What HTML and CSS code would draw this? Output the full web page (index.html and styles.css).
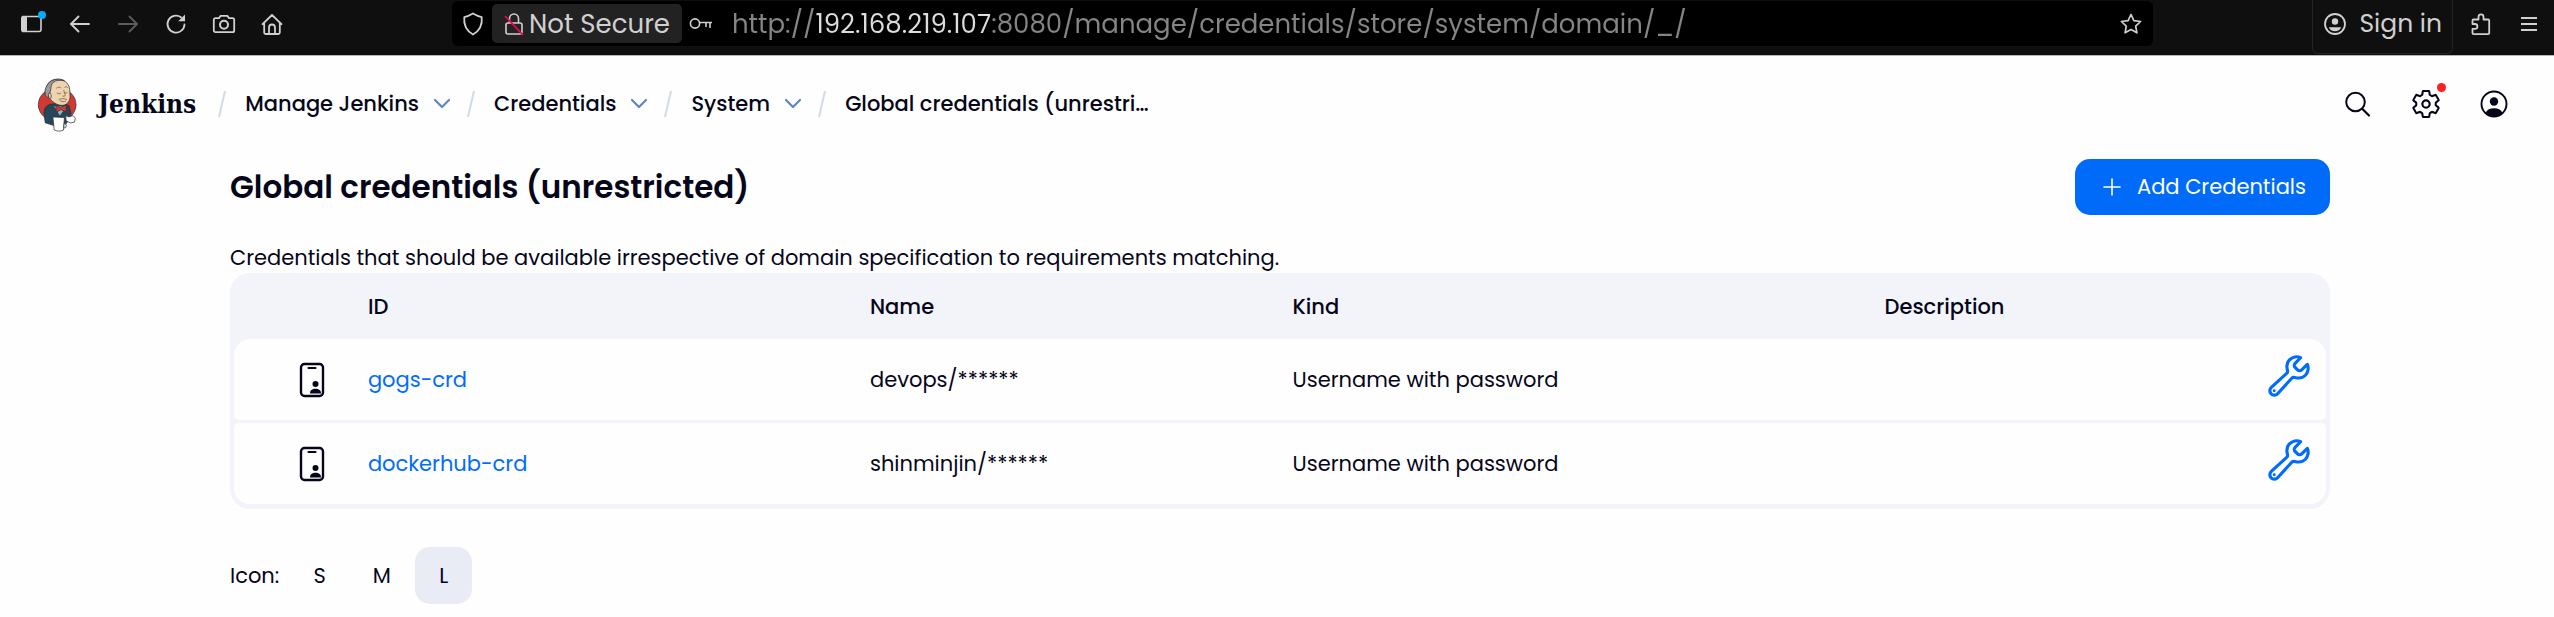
FILE: index.html
```html
<!doctype html>
<html lang="en">
  <head>
    <meta charset="utf-8">
    <title>Global credentials (unrestricted) - Jenkins</title>
    <link rel="stylesheet" href="styles.css">
  </head>
  <body>

    <!-- browser toolbar -->
    <div class="toolbar">
      <div class="toolbar-nav">
        <button class="tool" aria-label="Sidebar">
          <svg viewBox="0 0 24 24"><path d="M3 4.5h16a2 2 0 0 1 2 2v11a2 2 0 0 1-2 2H3z" fill="none" stroke="currentColor" stroke-width="1.600"/><path d="M3 4h4v16H3a2 2 0 0 1-2-2V6a2 2 0 0 1 2-2z" fill="currentColor"/><circle cx="22" cy="3" r="4" fill="#00adff"/></svg>
        </button>
        <button class="tool" aria-label="Back">
          <svg viewBox="0 0 24 24"><path d="M10.500 4.500 3 12l7.500 7.500M3 12h18" fill="none" stroke="currentColor" stroke-width="1.900" stroke-linecap="round"/></svg>
        </button>
        <button class="tool tool-off" aria-label="Forward">
          <svg viewBox="0 0 24 24"><path d="M13.500 4.500 21 12l-7.500 7.500M21 12H3" fill="none" stroke="currentColor" stroke-width="1.900" stroke-linecap="round"/></svg>
        </button>
        <button class="tool" aria-label="Reload">
          <svg viewBox="0 0 24 24"><path d="M20.500 12.500A8.500 8.500 0 1 1 17 5.200" fill="none" stroke="currentColor" stroke-width="1.800" stroke-linecap="round"/><path d="M21 2.500v6.800h-6.800z" fill="currentColor"/></svg>
        </button>
        <button class="tool" aria-label="Screenshot">
          <svg viewBox="0 0 24 24"><path d="M3.500 6.200H7l1.600-2.400h6.800L17 6.200h3.500a1.700 1.700 0 0 1 1.700 1.700v10.600a1.700 1.700 0 0 1-1.700 1.700h-17a1.700 1.700 0 0 1-1.700-1.700V7.900a1.700 1.700 0 0 1 1.700-1.700z" fill="none" stroke="currentColor" stroke-width="1.800" stroke-linejoin="round"/><circle cx="12" cy="12.700" r="4" fill="none" stroke="currentColor" stroke-width="2"/></svg>
        </button>
        <button class="tool" aria-label="Home">
          <svg viewBox="0 0 24 24"><path d="M2.500 12.200 12 3l9.500 9.200M4.200 11v9.500a1.500 1.500 0 0 0 1.500 1.500h12.600a1.500 1.500 0 0 0 1.500-1.500V11M9 22v-6.500a3 3 0 0 1 6 0V22" fill="none" stroke="currentColor" stroke-width="1.800" stroke-linecap="round" stroke-linejoin="round"/></svg>
        </button>
      </div>

      <div class="urlbar">
        <svg class="url-shield" viewBox="0 0 22 24"><path d="M11 1.500c3 1.800 5.500 2.900 8.700 3.600.8 7.400-1.700 13.400-8.700 17.400C4 18.500 1.500 12.500 2.300 5.100 5.500 4.400 8 3.300 11 1.500z" fill="none" stroke="currentColor" stroke-width="1.800" stroke-linejoin="round"/></svg>
        <button class="not-secure">
          <svg viewBox="0 0 20 24"><path d="M5.500 11V6.500a4.500 4.500 0 0 1 9 0V11M4 11h12a2 2 0 0 1 2 2v7a2 2 0 0 1-2 2H4a2 2 0 0 1-2-2v-7a2 2 0 0 1 2-2z" fill="none" stroke="currentColor" stroke-width="1.600"/><path d="M1 4l18 19" stroke="#f0064b" stroke-width="1.800"/></svg>
          Not Secure
        </button>
        <svg class="url-key" viewBox="0 0 24 14"><circle cx="6" cy="6.500" r="4.600" fill="none" stroke="currentColor" stroke-width="1.600"/><path d="M10.600 5.500H23M21 5.500V11M17 5.500V10" fill="none" stroke="currentColor" stroke-width="1.600"/></svg>
        <input class="url-input" type="text" aria-label="Address" value="http://192.168.219.107:8080/manage/credentials/store/system/domain/_/">
        <button class="tool" aria-label="Bookmark">
          <svg viewBox="0 0 24 24"><path d="M12 2.500l2.900 6.100 6.700.9-4.900 4.600 1.200 6.700L12 17.600l-5.900 3.200 1.200-6.700-4.900-4.600 6.700-.9z" fill="none" stroke="currentColor" stroke-width="1.700" stroke-linejoin="round"/></svg>
        </button>
      </div>

      <button class="sign-in">
        <svg viewBox="0 0 24 24"><circle cx="12" cy="12" r="10" fill="none" stroke="currentColor" stroke-width="1.800"/><circle cx="12" cy="9.500" r="3.200" fill="currentColor"/><path d="M5.800 15.200h12.400c-1 2.600-3.400 4-6.200 4s-5.200-1.400-6.200-4z" fill="currentColor"/></svg>
        Sign in
      </button>
      <div class="toolbar-end">
        <button class="tool" aria-label="Extensions">
          <svg viewBox="0 0 24 24"><path d="M3.500 8.500a1 1 0 0 1 1-1h5V4.800a2.500 2.500 0 0 1 5 0v2.700h4.700a1 1 0 0 1 1 1V21a1.200 1.200 0 0 1-1.200 1.200H4.700A1.200 1.200 0 0 1 3.500 21v-4.200H6a2.400 2.400 0 0 0 0-4.800H3.500z" fill="none" stroke="currentColor" stroke-width="1.800" stroke-linejoin="round"/></svg>
        </button>
        <button class="tool" aria-label="Menu">
          <svg viewBox="0 0 24 24"><path d="M4 6h16M4 12h16M4 18h16" stroke="currentColor" stroke-width="1.800"/></svg>
        </button>
      </div>
    </div>

    <!-- jenkins header -->
    <header class="header">
      <a class="brand" href="/">
        <svg class="brand-logo" viewBox="20 32 130 165">
          <g stroke="#2b3035" stroke-width="2.200" stroke-linejoin="round">
            <ellipse cx="84" cy="115" rx="57" ry="51" fill="#d33833"/>
            <path d="M62 114c-12 4-18 14-18 26l4 30 26 8 38-6 14-30-6-24-20-8z" fill="#24475a"/>
            <path d="M72 118l20 32 22-30z" fill="#8fb4c6"/>
            <path d="M52 78c-4-22 8-38 30-40 22-1 36 10 40 30l1 24c-1 16-12 26-26 25-18-1-36-14-45-39z" fill="#efd3ae"/>
            <path d="M48 84c-2-10 0-20 6-28 6-12 18-18 34-18 8 0 14 2 18 5-14-3-26-2-34 5-6 5-6 12-7 18l-4 20-4 8c-5-2-8-6-9-10z" fill="#9a9a9c"/>
            <path d="M57 82c4-4 9-1 9 7s-4 10-7 5z" fill="#efd3ae"/>
            <path d="M80 117l14 7 17-9 1 22-16-7-15 8z" fill="#d33833"/>
            <path d="M71 152l35 2-3 38c-8 4-20 4-28-1z" fill="#fff"/>
            <path d="M110 148l9 4 13-4 7 8-3 12-12 2-13-6z" fill="#fff"/>
            <path d="M105 172l7 4-2 8-6 2z" fill="#fff"/>
          </g>
          <path d="M82 65c4-4 9-4 13-1M107 62c3-2 6-1 8 1M84 80c4 3 8 3 11 0M106 79c3 2 6 2 8-1M104 72c1 8 5 11 4 15-1 3-4 3-7 2M90 99c7-3 14-3 22 0M93 103c6 4 12 4 17 1" fill="none" stroke="#5a4a3c" stroke-width="2" stroke-linecap="round"/>
        </svg>
        Jenkins
      </a>
      <nav class="crumbs">
        <svg class="slash" viewBox="0 0 10 28"><path d="M8 1 2 27" stroke="#d3dae8" stroke-width="2"/></svg>
        <a href="/manage">Manage Jenkins</a>
        <svg class="chevron" viewBox="0 0 18 10"><path d="M2 1l7 7 7-7" fill="none" stroke="#5f87bf" stroke-width="2.200" stroke-linecap="round" stroke-linejoin="round"/></svg>
        <svg class="slash" viewBox="0 0 10 28"><path d="M8 1 2 27" stroke="#d3dae8" stroke-width="2"/></svg>
        <a href="/manage/credentials">Credentials</a>
        <svg class="chevron" viewBox="0 0 18 10"><path d="M2 1l7 7 7-7" fill="none" stroke="#5f87bf" stroke-width="2.200" stroke-linecap="round" stroke-linejoin="round"/></svg>
        <svg class="slash" viewBox="0 0 10 28"><path d="M8 1 2 27" stroke="#d3dae8" stroke-width="2"/></svg>
        <a href="/manage/credentials/store/system">System</a>
        <svg class="chevron" viewBox="0 0 18 10"><path d="M2 1l7 7 7-7" fill="none" stroke="#5f87bf" stroke-width="2.200" stroke-linecap="round" stroke-linejoin="round"/></svg>
        <svg class="slash" viewBox="0 0 10 28"><path d="M8 1 2 27" stroke="#d3dae8" stroke-width="2"/></svg>
        <a href="/manage/credentials/store/system/domain/_">Global credentials (unrestri…</a>
      </nav>
      <div class="header-actions">
        <button aria-label="Search">
          <svg viewBox="0 0 28 28"><circle cx="11.500" cy="12" r="9.300" fill="none" stroke="currentColor" stroke-width="2"/><path d="M18.500 19l6.500 6.500" stroke="currentColor" stroke-width="2.200" stroke-linecap="round"/></svg>
        </button>
        <button aria-label="Manage Jenkins">
          <svg viewBox="26 26 460 460"><path d="M416.390 256a154.340 154.340 0 0 1-1.530 20.790l45.210 35.460a10.810 10.810 0 0 1 2.450 13.750l-42.770 74a10.810 10.810 0 0 1-13.140 4.590l-44.900-18.080a16.110 16.110 0 0 0-15.170 1.750A164.480 164.480 0 0 1 325 400.800a15.940 15.940 0 0 0-8.820 12.140l-6.730 47.890a11.080 11.080 0 0 1-10.680 9.170h-85.540a11.110 11.110 0 0 1-10.690-8.870l-6.720-47.820a16.070 16.070 0 0 0-9-12.220 155.300 155.300 0 0 1-21.460-12.570 16 16 0 0 0-15.110-1.710l-44.890 18.070a10.810 10.810 0 0 1-13.140-4.580l-42.770-74a10.800 10.800 0 0 1 2.450-13.750l38.210-30a16.050 16.050 0 0 0 6-14.080c-.36-4.170-.58-8.330-.58-12.500s.21-8.270.58-12.350a16 16 0 0 0-6.070-13.940l-38.190-30A10.810 10.810 0 0 1 49.480 186l42.770-74a10.810 10.810 0 0 1 13.140-4.590l44.900 18.080a16.110 16.110 0 0 0 15.170-1.750A164.480 164.480 0 0 1 187 111.200a15.940 15.940 0 0 0 8.820-12.140l6.730-47.890A11.080 11.080 0 0 1 213.230 42h85.540a11.110 11.110 0 0 1 10.690 8.870l6.720 47.820a16.070 16.070 0 0 0 9 12.220 155.300 155.300 0 0 1 21.460 12.570 16 16 0 0 0 15.110 1.710l44.890-18.070a10.810 10.810 0 0 1 13.140 4.580l42.770 74a10.800 10.800 0 0 1-2.450 13.750l-38.210 30a16.050 16.050 0 0 0-6.050 14.080c.33 4.140.55 8.300.55 12.470z" fill="none" stroke="currentColor" stroke-width="34" stroke-linejoin="round"/><circle cx="256" cy="256" r="60" fill="none" stroke="currentColor" stroke-width="36"/></svg>
          <span class="badge"></span>
        </button>
        <button aria-label="User">
          <svg viewBox="0 0 28 28"><circle cx="14" cy="14" r="12.500" fill="none" stroke="currentColor" stroke-width="1.900"/><circle cx="14" cy="11.500" r="4.200" fill="currentColor"/><path d="M5.500 23c1.500-3.300 4.500-4.700 8.500-4.700s7 1.400 8.500 4.700c-4 5-13 5-17 0z" fill="currentColor"/></svg>
        </button>
      </div>
    </header>

    <main class="page">
      <div class="page-head">
        <h1>Global credentials (unrestricted)</h1>
        <button class="add-button">
          <svg viewBox="0 0 18 18"><path d="M9 1v16M1 9h16" stroke="currentColor" stroke-width="1.600" stroke-linecap="round"/></svg>
          Add Credentials
        </button>
      </div>

      <p class="intro">Credentials that should be available irrespective of domain specification to requirements matching.</p>

      <div class="table-box">
        <table>
          <colgroup>
            <col class="col-icon"><col class="col-id"><col class="col-name"><col class="col-kind"><col><col class="col-tool">
          </colgroup>
          <thead>
            <tr>
              <th></th>
              <th>ID</th>
              <th>Name</th>
              <th>Kind</th>
              <th>Description</th>
              <th></th>
            </tr>
          </thead>
          <tbody>
            <tr>
              <td class="cell-icon"><svg class="phone" viewBox="0 0 26 36"><rect x="2" y="2" width="22" height="32" rx="3.500" fill="none" stroke="currentColor" stroke-width="2.400"/><path d="M9.500 6h7" stroke="currentColor" stroke-width="2.200" stroke-linecap="round"/><circle cx="16.500" cy="22" r="3" fill="currentColor"/><path d="M11 31.500c0-3.200 2.200-4.700 5.500-4.700s5.500 1.500 5.500 4.700z" fill="currentColor"/></svg></td>
              <td><a href="#gogs-crd">gogs-crd</a></td>
              <td>devops/******</td>
              <td>Username with password</td>
              <td></td>
              <td class="cell-tool"><a href="#update-gogs" aria-label="Update"><svg class="wrench" viewBox="28 28 456 456"><path d="M393.870 190a32.100 32.100 0 0 1-45.250 0l-26.570-26.570a32.090 32.090 0 0 1 0-45.260L382.190 58a1 1 0 0 0-.3-1.640c-38.820-16.640-89.150-8.160-121.110 23.570-30.580 30.350-32.320 76-21.120 115.840a31.930 31.930 0 0 1-9.060 32.080L64 380a48.170 48.170 0 1 0 68 68l153.860-167a31.930 31.930 0 0 1 31.600-9.130c39.540 10.590 84.540 8.600 114.720-21.190 32.490-32 39.500-88.560 23.750-120.930a1 1 0 0 0-1.600-.26z" fill="none" stroke="currentColor" stroke-width="34" stroke-linecap="round"/><circle cx="96" cy="416" r="16" fill="currentColor"/></svg></a></td>
            </tr>
            <tr>
              <td class="cell-icon"><svg class="phone" viewBox="0 0 26 36"><rect x="2" y="2" width="22" height="32" rx="3.500" fill="none" stroke="currentColor" stroke-width="2.400"/><path d="M9.500 6h7" stroke="currentColor" stroke-width="2.200" stroke-linecap="round"/><circle cx="16.500" cy="22" r="3" fill="currentColor"/><path d="M11 31.500c0-3.200 2.200-4.700 5.500-4.700s5.500 1.500 5.500 4.700z" fill="currentColor"/></svg></td>
              <td><a href="#dockerhub-crd">dockerhub-crd</a></td>
              <td>shinminjin/******</td>
              <td>Username with password</td>
              <td></td>
              <td class="cell-tool"><a href="#update-dockerhub" aria-label="Update"><svg class="wrench" viewBox="28 28 456 456"><path d="M393.870 190a32.100 32.100 0 0 1-45.250 0l-26.570-26.570a32.090 32.090 0 0 1 0-45.260L382.190 58a1 1 0 0 0-.3-1.640c-38.820-16.640-89.150-8.160-121.110 23.570-30.580 30.350-32.320 76-21.120 115.840a31.930 31.930 0 0 1-9.060 32.080L64 380a48.170 48.170 0 1 0 68 68l153.860-167a31.930 31.930 0 0 1 31.600-9.130c39.540 10.590 84.540 8.600 114.720-21.190 32.490-32 39.500-88.560 23.750-120.930a1 1 0 0 0-1.600-.26z" fill="none" stroke="currentColor" stroke-width="34" stroke-linecap="round"/><circle cx="96" cy="416" r="16" fill="currentColor"/></svg></a></td>
            </tr>
          </tbody>
        </table>
      </div>

      <div class="icon-size">
        <span>Icon:</span>
        <button>S</button>
        <button>M</button>
        <button class="selected">L</button>
      </div>
    </main>

  </body>
</html>
```
FILE: styles.css
```css
* {
  box-sizing: border-box;
}

body {
  margin: 0;
  background-color: #fefefe;
  color: #06061a;
  font-family: Poppins, Inter, sans-serif;
  font-size: 21px;
  line-height: 32px;
}

a {
  color: #006cff;
  text-decoration: none;
}

button {
  border: 0;
  padding: 0;
  background: none;
  color: inherit;
  font: inherit;
}

svg {
  display: block;
  flex: none;
  overflow: visible;
}

/* browser toolbar */
.toolbar {
  display: flex;
  align-items: flex-start;
  height: 56px;
  padding: 0 13px 0 20px;
  border-bottom: 1px solid #b5b5b5;
  background-color: #0f0f0f;
  color: #d0d0d0;
}

.toolbar-nav {
  display: flex;
  align-items: center;
  gap: 24px;
  height: 48px;
}

.tool svg {
  width: 24px;
  height: 24px;
}

.tool-off {
  color: #5c5c5c;
}

.urlbar {
  flex: 1;
  display: flex;
  align-items: center;
  height: 45px;
  margin: 1px 159px 0 168px;
  padding: 0 10px;
  border-radius: 6px;
  background-color: #000;
}

.url-shield {
  width: 22px;
  height: 24px;
}

.not-secure {
  display: flex;
  align-items: center;
  gap: 5px;
  height: 39px;
  margin-left: 8px;
  padding: 0 12px;
  border-radius: 5px;
  background-color: #222;
  font-size: 26px;
}

.not-secure svg {
  width: 20px;
  height: 24px;
}

.url-key {
  width: 24px;
  height: 14px;
  margin: 0 19px 0 7px;
}

/* the host part is drawn brighter than the rest of the address */
.url-input {
  flex: 1;
  min-width: 0;
  padding: 0;
  border: 0;
  outline: 0;
  background: linear-gradient(to right, #858585 82px, #dcdcdc 82px, #dcdcdc 258px, #858585 258px);
  -webkit-background-clip: text;
  background-clip: text;
  color: #858585;
  -webkit-text-fill-color: transparent;
  font: inherit;
  font-size: 26px;
}

.sign-in {
  display: flex;
  align-items: center;
  gap: 12px;
  height: 54px;
  padding: 0 10px 6px;
  border: 1px solid #242424;
  border-top: 0;
  border-radius: 0 0 6px 6px;
  font-size: 25px;
}

.sign-in svg {
  width: 24px;
  height: 24px;
}

.toolbar-end {
  display: flex;
  align-items: center;
  gap: 24px;
  height: 48px;
  margin-left: 16px;
}

/* jenkins header */
.header {
  display: flex;
  align-items: center;
  height: 96px;
  padding: 0 46px 0 36px;
}

.brand {
  display: flex;
  align-items: center;
  gap: 19px;
  color: #06061a;
  font-family: "DejaVu Serif Condensed", "DejaVu Serif", serif;
  font-size: 26px;
  font-weight: bold;
}

.brand-logo {
  width: 43px;
  height: 55px;
}

.crumbs {
  display: flex;
  align-items: center;
  margin-left: 21px;
}

.crumbs a {
  color: #06061a;
  font-weight: 500;
  white-space: nowrap;
}

.slash {
  width: 10px;
  height: 28px;
  margin-right: 18px;
}

.chevron {
  width: 18px;
  height: 10px;
  margin: 0 15px 0 14px;
}

.header-actions {
  display: flex;
  gap: 40px;
  margin-left: auto;
}

.header-actions button {
  position: relative;
}

.header-actions svg {
  width: 28px;
  height: 28px;
}

.badge {
  position: absolute;
  top: -7px;
  right: -6px;
  width: 9px;
  height: 9px;
  border-radius: 50%;
  background-color: #ff1f1f;
}

/* page */
.page {
  padding: 7px 224px 0 230px;
}

.page-head {
  display: flex;
  justify-content: space-between;
  align-items: center;
}

h1 {
  margin: 0;
  font-size: 31px;
  font-weight: 600;
  line-height: 48px;
}

.add-button {
  display: flex;
  align-items: center;
  gap: 16px;
  height: 56px;
  padding: 0 24px 0 28px;
  border-radius: 15px;
  background-color: #006bf8;
  color: #fff;
}

.add-button svg {
  width: 18px;
  height: 18px;
}

.intro {
  margin: 28px 0 0;
  line-height: 30px;
}

.table-box {
  padding: 0 4px 2px;
  border-radius: 20px;
  background-color: #f3f4f9;
}

table {
  width: 100%;
  table-layout: fixed;
  border-spacing: 0 3px;
}

.col-icon {
  width: 6.4%;
}

.col-id {
  width: 24%;
}

.col-name {
  width: 20.2%;
}

.col-kind {
  width: 28.3%;
}

.col-tool {
  width: 5%;
}

th {
  height: 60px;
  padding: 2px 0 0;
  font-weight: 500;
  text-align: left;
}

td {
  height: 81px;
  padding: 0;
  background-color: #fefefe;
}

td:first-child {
  border-radius: 5px 0 0 5px;
}

td:last-child {
  border-radius: 0 5px 5px 0;
}

tbody tr:first-child td:first-child {
  border-top-left-radius: 16px;
}

tbody tr:first-child td:last-child {
  border-top-right-radius: 16px;
}

tbody tr:last-child td:first-child {
  border-bottom-left-radius: 16px;
}

tbody tr:last-child td:last-child {
  border-bottom-right-radius: 16px;
}

.cell-icon {
  padding-left: 65px;
}

.phone {
  width: 26px;
  height: 36px;
}

.cell-tool {
  padding: 0 16px 8px 0;
}

.wrench {
  width: 42px;
  height: 42px;
  margin-left: auto;
}

.icon-size {
  display: flex;
  align-items: center;
  gap: 5px;
  margin-top: 38px;
}

.icon-size span {
  margin-right: 7px;
}

.icon-size button {
  width: 57px;
  height: 57px;
  border-radius: 15px;
}

.icon-size .selected {
  background-color: #e9ecf5;
}
```
